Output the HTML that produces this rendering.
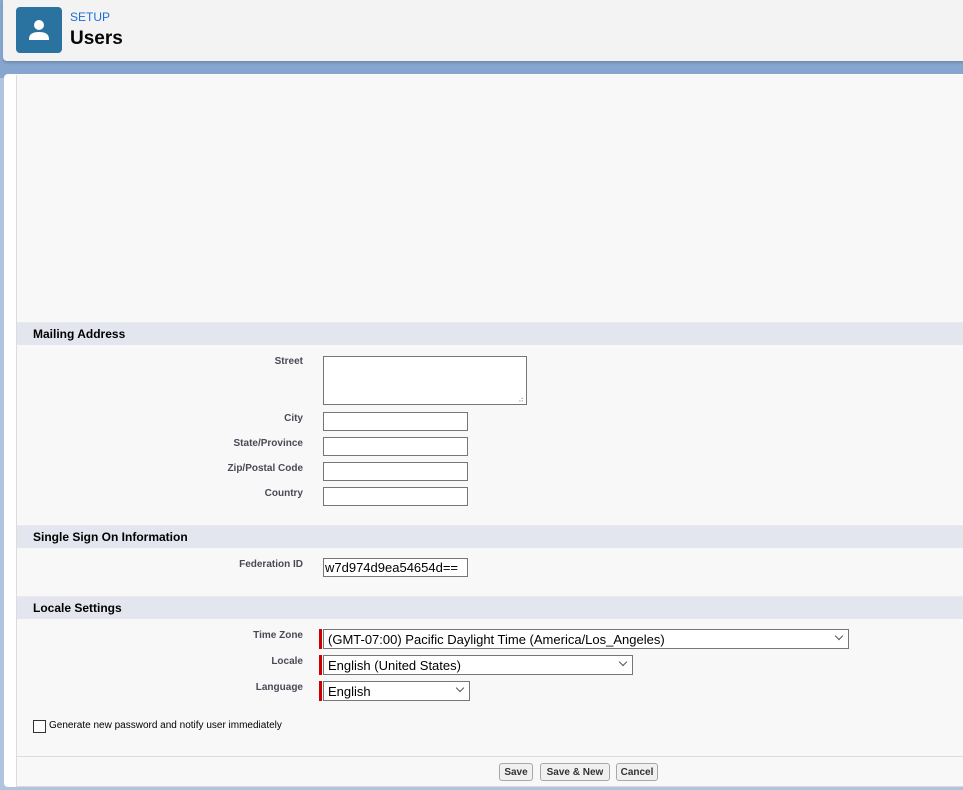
<!DOCTYPE html>
<html><head><style>
body{margin:0;width:963px;height:790px;overflow:hidden;background:#b0c4df;font-family:"Liberation Sans",Arial,sans-serif;position:relative}
.band{position:absolute;left:0;top:0;width:963px;height:78px;background:#86a5cf}
.hdr{position:absolute;left:3px;top:0;width:970px;height:61px;background:#f3f3f3;border-radius:0 0 4px 4px;box-shadow:0 2px 2px rgba(0,0,0,.15)}
.icon{position:absolute;left:13px;top:7px;width:46px;height:46px;background:#2a73a0;border-radius:4px}
.setup{position:absolute;left:70px;top:10px;font-size:12px;color:#1b6ed6}
.title{position:absolute;left:70px;top:28px;font-size:19px;font-weight:bold;color:#080707}
.card{position:absolute;left:4px;top:74px;width:970px;height:713px;background:#fff;border-radius:4px}
.inner{position:absolute;left:16px;top:75px;width:950px;height:711px;background:#f8f8f8;border-left:1px solid #dcdcdc;border-bottom:1px solid #dcdcdc}
.sec{position:absolute;left:17px;width:950px;height:23px;background:#e3e6ee;font-size:12px;font-weight:bold;color:#000;line-height:22px;padding-left:16px;box-sizing:border-box;border-top:1px solid #eaeaea}
.lbl{position:absolute;right:660px;font-size:10px;font-weight:bold;color:#4a4a56;text-align:right}
.in{position:absolute;left:323px;width:145px;height:19px;border:1px solid #767676;background:#fff;box-sizing:border-box}
.sel{position:absolute;height:20px;border:1px solid #767676;background:#fff;box-sizing:border-box;font-size:13px;line-height:19px;padding-left:4px}
.sel:before{content:"";position:absolute;left:-5px;top:-1px;width:3px;height:20px;background:#c00}
.chev{position:absolute;right:6px;top:3px;width:5px;height:5px;border-right:1px solid #555;border-bottom:1px solid #555;transform:rotate(45deg)}
.btn{position:absolute;top:763px;height:18px;border:1px solid #a8a8a8;border-radius:3px;background:#f0f0f0;font-size:10px;font-weight:bold;color:#333;line-height:17px;text-align:center;box-sizing:border-box}
</style></head><body>
<div class="band"></div>
<div class="hdr">
<div class="icon"><svg width="46" height="46" viewBox="0 0 46 46"><circle cx="23" cy="18" r="5" fill="#fff"/><path d="M13 32c0-5 4-7 10-7s10 2 10 7v1H13z" fill="#fff"/></svg></div>
</div>
<div class="setup">SETUP</div>
<div class="title">Users</div>
<div class="card"></div>
<div class="inner"></div>
<div style="position:absolute;left:17px;top:756px;width:950px;height:1px;background:#dcdcdc"></div>
<div class="sec" style="top:322px">Mailing Address</div>
<div class="lbl" style="top:356px">Street</div>
<div style="position:absolute;left:323px;top:356px;width:204px;height:49px;border:1px solid #767676;background:#fff;box-sizing:border-box"><span style="position:absolute;right:2px;bottom:0;font-size:8px;color:#999">⠴</span></div>
<div class="lbl" style="top:413px">City</div><div class="in" style="top:412px"></div>
<div class="lbl" style="top:438px">State/Province</div><div class="in" style="top:437px"></div>
<div class="lbl" style="top:463px">Zip/Postal Code</div><div class="in" style="top:462px"></div>
<div class="lbl" style="top:488px">Country</div><div class="in" style="top:487px"></div>
<div class="sec" style="top:525px">Single Sign On Information</div>
<div class="lbl" style="top:559px">Federation ID</div>
<div class="in" style="top:558px;font-size:13px;line-height:17px;padding-left:1px">w7d974d9ea54654d==</div>
<div class="sec" style="top:596px">Locale Settings</div>
<div class="lbl" style="top:630px">Time Zone</div>
<div class="sel" style="left:323px;top:629px;width:526px">(GMT-07:00) Pacific Daylight Time (America/Los_Angeles)<i class="chev"></i></div>
<div class="lbl" style="top:656px">Locale</div>
<div class="sel" style="left:323px;top:655px;width:310px">English (United States)<i class="chev"></i></div>
<div class="lbl" style="top:682px">Language</div>
<div class="sel" style="left:323px;top:681px;width:147px">English<i class="chev"></i></div>
<div style="position:absolute;left:33px;top:720px;width:13px;height:13px;border:1px solid #333;background:#fff;box-sizing:border-box"></div>
<div style="position:absolute;left:49px;top:720px;font-size:10px;color:#000">Generate new password and notify user immediately</div>
<div class="btn" style="left:499px;width:34px">Save</div>
<div class="btn" style="left:540px;width:70px">Save &amp; New</div>
<div class="btn" style="left:616px;width:42px">Cancel</div>
</body></html>
